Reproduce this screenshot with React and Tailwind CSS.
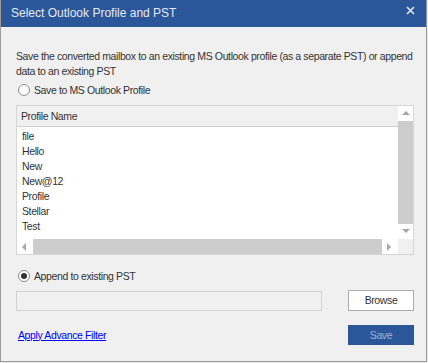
import React from 'react';

const profiles = ['file', 'Hello', 'New', 'New@12', 'Profile', 'Stellar', 'Test'];

function Radio({ checked, label }) {
  return (
    <div className="flex items-center gap-[4px] h-[14px]">
      <span className="w-[12px] h-[12px] rounded-full border border-[#8c8c8c] bg-white flex items-center justify-center">
        {checked && <span className="w-[6px] h-[6px] rounded-full bg-[#333]" />}
      </span>
      <span className="text-[#333]">{label}</span>
    </div>
  );
}

function Arrow({ dir }) {
  const pts = {
    up: '1,6 5,2 9,6',
    down: '1,2 5,6 9,2',
    left: '6,1 2,5 6,9',
    right: '2,1 6,5 2,9',
  }[dir];
  return (
    <svg width="10" height="10" viewBox="0 0 10 10" className="block">
      <polygon points={pts} fill="#a6a6a6" />
    </svg>
  );
}

export default function App() {
  return (
    <div
      className="w-[428px] h-[363px] bg-[#e8e8e8] text-[10.5px] leading-[15px] tracking-[-0.38px]"
      style={{ fontFamily: '"Liberation Sans", Arial, sans-serif' }}
    >
      <div className="w-[427px] h-[362px] bg-[#f0f0f0] border-l border-r border-b border-[#9a9a9a] flex flex-col">
        {/* Title bar */}
        <div className="h-[27px] bg-[#2b579a] flex items-center justify-between pl-[10px] pr-[11px] shrink-0">
          <span className="text-[#e4eaf3] text-[12px] tracking-normal">Select Outlook Profile and PST</span>
          <svg width="9" height="9" viewBox="0 0 9 9" className="-mt-[7px]">
            <path d="M1 1 L8 8 M8 1 L1 8" stroke="#e4eaf3" strokeWidth="1.6" />
          </svg>
        </div>

        {/* Body */}
        <div className="flex flex-col px-[15px] pt-[22px]">
          <p className="text-[#333] whitespace-nowrap">
            Save the converted mailbox to an existing MS Outlook profile (as a separate PST) or append
            <br />
            data to an existing PST
          </p>

          <div className="mt-[4px] pl-[2px]">
            <Radio label="Save to MS Outlook Profile" />
          </div>

          {/* List */}
          <div className="mt-[8px] w-[398px] h-[150px] border border-[#d6d6d6] bg-white flex flex-col">
            <div className="flex flex-1 min-h-0">
              <div className="flex-1 flex flex-col">
                <div className="h-[21px] bg-[#f0f0f0] border-b border-[#d0d0d0] flex items-center pl-[4px] text-[#333]">
                  Profile Name
                </div>
                <div className="pt-[2px] pl-[5px]">
                  {profiles.map((p) => (
                    <div key={p} className="h-[15px] text-[#333]">{p}</div>
                  ))}
                </div>
              </div>
              <div className="w-[15px] flex flex-col">
                <div className="h-[15px] flex items-center justify-center bg-white"><Arrow dir="up" /></div>
                <div className="flex-1 bg-[#cdcdcd]" />
                <div className="h-[15px] flex items-center justify-center bg-white"><Arrow dir="down" /></div>
              </div>
            </div>
            <div className="h-[15px] flex">
              <div className="w-[16px] flex items-center justify-center"><Arrow dir="left" /></div>
              <div className="flex-1 bg-[#cdcdcd]" />
              <div className="w-[16px] flex items-center justify-center"><Arrow dir="right" /></div>
              <div className="w-[15px] bg-[#f0f0f0]" />
            </div>
          </div>

          <div className="mt-[14px] pl-[2px]">
            <Radio checked label="Append to existing PST" />
          </div>

          <div className="mt-[7px] flex items-center justify-between w-[398px]">
            <div className="w-[306px] h-[20px] border border-[#d2d2d2] bg-[#f0f0f0]" />
            <button className="w-[66px] h-[21px] border border-[#adadad] bg-white text-[#333] text-[10.5px]">
              Browse
            </button>
          </div>

          <div className="mt-[14px] flex items-center justify-between w-[398px]">
            <a className="pl-[2px] text-[#0000ff] underline">Apply Advance Filter</a>
            <button className="w-[66px] h-[20px] bg-[#2b579a] text-[#9fb2cf] text-[10.5px]">
              Save
            </button>
          </div>
        </div>
      </div>
    </div>
  );
}
